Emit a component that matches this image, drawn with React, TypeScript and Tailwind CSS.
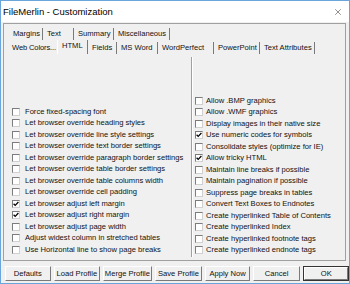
import { X } from 'lucide-react'

const leftOpts: [string, boolean][] = [
  ['Force fixed-spacing font', false],
  ['Let browser override heading styles', false],
  ['Let browser override line style settings', false],
  ['Let browser override text border settings', false],
  ['Let browser override paragraph border settings', false],
  ['Let browser override table border settings', false],
  ['Let browser override table columns width', false],
  ['Let browser override cell padding', false],
  ['Let browser adjust left margin', true],
  ['Let browser adjust right margin', true],
  ['Let browser adjust page width', false],
  ['Adjust widest column in stretched tables', false],
  ['Use Horizontal line to show page breaks', false],
]

const rightOpts: [string, boolean][] = [
  ['Allow .BMP graphics', false],
  ['Allow .WMF graphics', false],
  ['Display images in their native size', false],
  ['Use numeric codes for symbols', true],
  ['Consolidate styles (optimize for IE)', false],
  ['Allow tricky HTML', true],
  ['Maintain line breaks if possible', false],
  ['Maintain pagination if possible', false],
  ['Suppress page breaks in tables', false],
  ['Convert Text Boxes to Endnotes', false],
  ['Create hyperlinked Table of Contents', false],
  ['Create hyperlinked Index', false],
  ['Create hyperlinked footnote tags', false],
  ['Create hyperlinked endnote tags', false],
]

const row1 = [
  { label: 'Margins', w: 'w-[34px]' },
  { label: 'Text', w: 'w-[31px]' },
  { label: 'Summary', w: 'w-[40px]' },
  { label: 'Miscellaneous', w: 'w-[56px]' },
]

const row2 = [
  { label: 'Fields', w: 'w-[29px]' },
  { label: 'MS Word', w: 'w-[41px]' },
  { label: 'WordPerfect', w: 'w-[56px]' },
  { label: 'PowerPoint', w: 'w-[46px]' },
  { label: 'Text Attributes', w: 'w-[55px]' },
]

const buttons = [
  { label: 'Defaults', w: 'w-[46px]' },
  { label: 'Load Profile', w: 'w-[47px]' },
  { label: 'Merge Profile', w: 'w-[49px]' },
  { label: 'Save Profile', w: 'w-[48px]' },
  { label: 'Apply Now', w: 'w-[45px]' },
  { label: 'Cancel', w: 'w-[48px]' },
]

function Check({ on }: { on: boolean }) {
  return (
    <span className="relative w-[8px] h-[8px] shrink-0 bg-white border border-t-[#7c7c7c] border-l-[#7c7c7c] border-b-[#d0d0d0] border-r-[#d0d0d0]">
      {on && (
        <svg className="absolute left-0 top-0" width="6" height="6" viewBox="0 0 6 6">
          <path d="M0.6 2.8 L2.2 4.4 L5.4 1.0" fill="none" stroke="#000" strokeWidth="1.3" />
        </svg>
      )}
    </span>
  )
}

function OptionList({ items, gap }: { items: [string, boolean][]; gap: string }) {
  return (
    <div className="flex flex-col">
      {items.map(([label, on]) => (
        <div key={label} className={`flex items-center h-[11.5px] whitespace-nowrap ${gap}`}>
          <Check on={on} />
          <span>{label}</span>
        </div>
      ))}
    </div>
  )
}

export default function App() {
  return (
    <div className="w-[350px] h-[284px] overflow-hidden bg-[#f0f0f0] border border-[#6aa6dc] text-[#111] text-[7.6px] leading-none font-['Liberation_Sans',Arial,sans-serif]">
      {/* title bar */}
      <div className="h-[21px] bg-white flex items-center justify-between pl-[2px] pr-[6px]">
        <span className="text-[9.5px] text-black">FileMerlin - Customization</span>
        <X size={10} strokeWidth={1.2} className="text-[#222]" />
      </div>

      {/* tab control */}
      <div className="mt-[1px] ml-[2px] w-[343px] h-[238px] border border-[#a0a0a0] overflow-hidden">
        <div className="flex mt-[4px] ml-[5px] h-[12px]">
          {row1.map((t) => (
            <div key={t.label} className={`${t.w} h-full pl-[4px] flex items-center border-r border-r-[#7a7a7a] whitespace-nowrap`}>
              {t.label}
            </div>
          ))}
        </div>
        <div className="flex mt-[2px] ml-[5px] h-[12px] items-end">
          <div className="w-[48px] h-full pl-[3px] flex items-center whitespace-nowrap tracking-[-0.15px]">Web Colors...</div>
          <div className="w-[31px] h-[14px] pl-[4px] pb-[2px] flex items-center border-l border-l-white border-r border-r-[#7a7a7a] bg-[#f0f0f0] whitespace-nowrap">
            HTML
          </div>
          {row2.map((t) => (
            <div key={t.label} className={`${t.w} h-full pl-[4px] flex items-center border-r border-r-[#7a7a7a] whitespace-nowrap`}>
              {t.label}
            </div>
          ))}
        </div>

        {/* panel */}
        <div className="flex h-[206px]">
          <div className="w-[187px] pl-[8px] pt-[52px] overflow-hidden">
            <OptionList items={leftOpts} gap="gap-[5px]" />
          </div>
          <div className="mt-[3px] h-[200px] w-[2px] border-l border-l-[#a0a0a0] border-r border-r-white" />
          <div className="flex-1 pl-[2px] pt-[41px]">
            <OptionList items={rightOpts} gap="gap-[3px]" />
          </div>
        </div>
      </div>

      {/* buttons */}
      <div className="flex mt-[5px] ml-[4px] gap-[3px]">
        {buttons.map((b) => (
          <div
            key={b.label}
            className={`${b.w} h-[15px] flex items-center justify-center whitespace-nowrap border border-t-white border-l-white border-b-[#7a7a7a] border-r-[#7a7a7a]`}
          >
            {b.label}
          </div>
        ))}
        <div className="w-[46px] h-[15px] flex items-center justify-center border border-[#333]">
          <div className="w-full h-full flex items-center justify-center border border-t-white border-l-white border-b-[#7a7a7a] border-r-[#7a7a7a]">
            OK
          </div>
        </div>
      </div>
    </div>
  )
}
